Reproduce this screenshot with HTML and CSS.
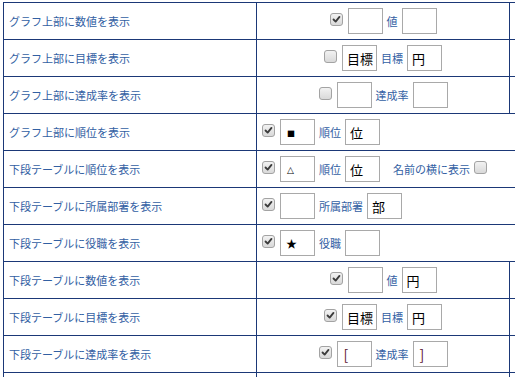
FILE: index.html
```html
<!DOCTYPE html>
<html lang="ja">
<head>
<meta charset="utf-8">
<link rel="stylesheet" href="styles.css">
</head>
<body>
<table class="settings">
  <tr>
    <td class="label">グラフ上部に数値を表示</td>
    <td class="opt"><div class="grp center"><span class="cb on"><svg viewBox="0 0 13 13"><path d="M3 6.5L5.5 9L10 3.5"/></svg></span><span class="box"></span><span class="txt">値</span><span class="box"></span></div></td>
    <td class="extra"></td>
  </tr>
  <tr>
    <td class="label">グラフ上部に目標を表示</td>
    <td class="opt"><div class="grp center"><span class="cb"></span><span class="box">目標</span><span class="txt">目標</span><span class="box">円</span></div></td>
    <td class="extra"></td>
  </tr>
  <tr>
    <td class="label">グラフ上部に達成率を表示</td>
    <td class="opt"><div class="grp center"><span class="cb"></span><span class="box"></span><span class="txt">達成率</span><span class="box"></span></div></td>
    <td class="extra"></td>
  </tr>
  <tr>
    <td class="label">グラフ上部に順位を表示</td>
    <td class="opt" colspan="2"><div class="grp left"><span class="cb on"><svg viewBox="0 0 13 13"><path d="M3 6.5L5.5 9L10 3.5"/></svg></span><span class="box sym small">■</span><span class="txt">順位</span><span class="box">位</span></div></td>
  </tr>
  <tr>
    <td class="label">下段テーブルに順位を表示</td>
    <td class="opt" colspan="2"><div class="grp left"><span class="cb on"><svg viewBox="0 0 13 13"><path d="M3 6.5L5.5 9L10 3.5"/></svg></span><span class="box sym small tri">△</span><span class="txt">順位</span><span class="box">位</span><span class="txt side">名前の横に表示</span><span class="cb"></span></div></td>
  </tr>
  <tr>
    <td class="label">下段テーブルに所属部署を表示</td>
    <td class="opt" colspan="2"><div class="grp left"><span class="cb on"><svg viewBox="0 0 13 13"><path d="M3 6.5L5.5 9L10 3.5"/></svg></span><span class="box"></span><span class="txt">所属部署</span><span class="box">部</span></div></td>
  </tr>
  <tr>
    <td class="label">下段テーブルに役職を表示</td>
    <td class="opt" colspan="2"><div class="grp left"><span class="cb on"><svg viewBox="0 0 13 13"><path d="M3 6.5L5.5 9L10 3.5"/></svg></span><span class="box sym">★</span><span class="txt">役職</span><span class="box"></span></div></td>
  </tr>
  <tr>
    <td class="label">下段テーブルに数値を表示</td>
    <td class="opt"><div class="grp center"><span class="cb on"><svg viewBox="0 0 13 13"><path d="M3 6.5L5.5 9L10 3.5"/></svg></span><span class="box"></span><span class="txt">値</span><span class="box">円</span></div></td>
    <td class="extra"></td>
  </tr>
  <tr>
    <td class="label">下段テーブルに目標を表示</td>
    <td class="opt"><div class="grp center"><span class="cb on"><svg viewBox="0 0 13 13"><path d="M3 6.5L5.5 9L10 3.5"/></svg></span><span class="box">目標</span><span class="txt">目標</span><span class="box">円</span></div></td>
    <td class="extra"></td>
  </tr>
  <tr>
    <td class="label">下段テーブルに達成率を表示</td>
    <td class="opt"><div class="grp center"><span class="cb on"><svg viewBox="0 0 13 13"><path d="M3 6.5L5.5 9L10 3.5"/></svg></span><span class="box brk">[</span><span class="txt">達成率</span><span class="box brk">]</span></div></td>
    <td class="extra"></td>
  </tr>
  <tr>
    <td class="label">&nbsp;</td>
    <td class="opt"></td>
    <td class="extra"></td>
  </tr>
</table>
</body>
</html>
```
FILE: styles.css
```css
html, body {
  margin: 0;
  overflow: hidden;
  background: #fff;
}
body {
  padding: 2px 0 0 3px;
  font-family: "Noto Sans CJK JP", "Noto Sans", sans-serif;
}
.settings {
  border-collapse: collapse;
  table-layout: fixed;
  width: 760px;
}
.settings td {
  border: 1px solid #1b3877;
  height: 36px;
  padding: 0;
  box-sizing: border-box;
}
.settings tr {
  height: 37px;
}
.label {
  width: 253px;
  font-size: 11px;
  color: #3260a3;
  padding-left: 5px !important;
  white-space: nowrap;
}
.opt {
  width: 253px;
}
.extra {
  width: 254px;
}
.grp {
  display: flex;
  align-items: center;
  gap: 4px;
}
.grp.center {
  justify-content: center;
}
.grp.left {
  justify-content: flex-start;
  padding-left: 5px;
}
.cb {
  width: 13px;
  height: 13px;
  box-sizing: border-box;
  border: 1px solid #a3a3a3;
  border-radius: 3px;
  background: linear-gradient(#f2f2f2, #d9d9d9);
  margin-right: 1px;
  margin-top: -4px;
  display: block;
}
.cb svg {
  display: block;
  width: 11px;
  height: 11px;
}
.cb svg path {
  fill: none;
  stroke: #3c3c3c;
  stroke-width: 2.2;
  stroke-linecap: round;
  stroke-linejoin: round;
}
.box {
  width: 35px;
  height: 26px;
  box-sizing: border-box;
  border: 1px solid #a9a9a9;
  background: #fff;
  font-size: 13px;
  color: #000;
  padding: 0 2px 0 4px;
  display: flex;
  align-items: center;
  white-space: nowrap;
  overflow: hidden;
}
.box.sym {
  font-size: 11px;
  padding-left: 5px;
}
.box.sym.small {
  font-size: 8px;
  padding-left: 6px;
  padding-top: 2px;
}
.box.sym.tri {
  font-family: "DejaVu Sans", sans-serif;
  font-size: 9px;
}
.box.brk {
  color: #5a1430;
  font-size: 14px;
  padding-left: 6px;
}
.txt {
  font-size: 11px;
  color: #3260a3;
  white-space: nowrap;
}
.txt.side {
  margin-left: 9px;
}
```
